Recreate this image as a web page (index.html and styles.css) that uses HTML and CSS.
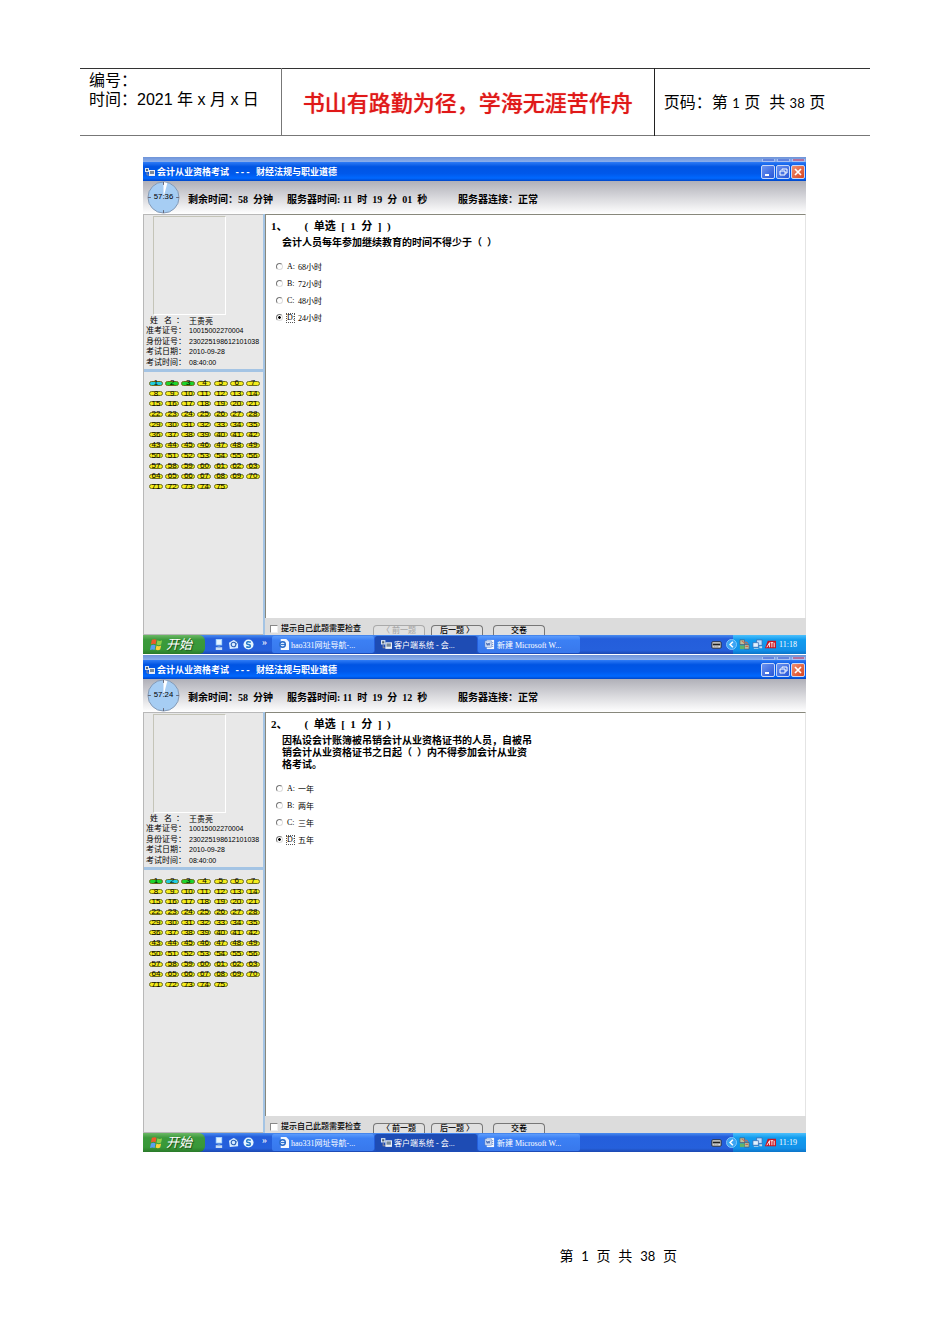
FILE: index.html
```html
<!DOCTYPE html>
<html lang="zh-CN">
<head>
    <meta charset="UTF-8">
    <meta name="viewport" content="width=device-width, initial-scale=1.0">
    <title>会计从业资格考试</title>
    <link rel="stylesheet" href="styles.css">
</head>
<body>

    <!-- shared icons -->
    <svg class="sprite" width="0" height="0" aria-hidden="true">
        <symbol id="i-app" viewBox="0 0 10 10">
            <path d="M0 1h4v4H0z" fill="#d8e4f4"/>
            <path d="M1 2h2v2H1z" fill="#567"/>
            <path d="M2 5v3h3" fill="none" stroke="#889" stroke-width="1"/>
            <path d="M4 3h6v6H4z" fill="#e8eef6"/>
            <path d="M5 4h4v3H5z" fill="#789"/>
        </symbol>
        <symbol id="i-flag" viewBox="0 0 14 14">
            <path d="M2 2q3-1.5 5 0L6 7Q4 5.5 1 7z" fill="#ee5a2a"/>
            <path d="M8 2.5q2.5 1.5 5 0l-1 4.5q-2.5 1.5-5 0z" fill="#8cd04a"/>
            <path d="M1 8q2.5-1.5 5 0l-1 5q-2.5-1.5-5 0z" fill="#58a0f0"/>
            <path d="M7 8q2.5 1.5 5 0l-1 4.5q-2.5 1.5-5 0z" fill="#fbd23c"/>
        </symbol>
        <symbol id="i-desk" viewBox="0 0 12 12">
            <path d="M3 0h7v7H3z" fill="#9fd0ff"/>
            <path d="M4 1h5v5H4z" fill="#e6f4ff"/>
            <path d="M3 9h7v3H3z" fill="#c8dcf4"/>
            <path d="M5 7h3v2H5z" fill="#5b8fd8"/>
        </symbol>
        <symbol id="i-mail" viewBox="0 0 12 12">
            <path d="M1 4l5-3 5 2v7l-9 1z" fill="#d8ecff"/>
            <circle cx="6" cy="6" r="2.5" fill="none" stroke="#2a62b8" stroke-width="1.2"/>
            <path d="M8 2l3 1-2 3" fill="none" stroke="#2a62b8" stroke-width="1"/>
        </symbol>
        <symbol id="i-s" viewBox="0 0 12 12">
            <circle cx="6" cy="6" r="5.5" fill="#e6f6ff"/>
            <path d="M8.5 3.5Q4 2 4 4.5 4 6 6 6t2 1.5Q8 10 3.5 8.5" fill="none" stroke="#2277c8" stroke-width="1.6"/>
        </symbol>
        <symbol id="i-ie" viewBox="0 0 12 12">
            <path d="M3 0h6l3 3v9H3z" fill="#f4f8ff"/>
            <circle cx="5" cy="6" r="3" fill="#dcecff" stroke="#2468c8" stroke-width="1.5"/>
            <path d="M3 6h5" stroke="#2468c8" stroke-width="1"/>
        </symbol>
        <symbol id="i-word" viewBox="0 0 12 12">
            <path d="M3 1h8v10H3z" fill="#f4f8ff"/>
            <path d="M1 2h7v7H1z" fill="#dbe7fa" stroke="#4a74c0" stroke-width=".6"/>
            <path d="M2.5 4l1 3 1-2.5 1 2.5 1-3M9 4h1M9 6h1M9 8h1" fill="none" stroke="#3158a8" stroke-width=".9"/>
        </symbol>
        <symbol id="i-kbd" viewBox="0 0 12 12">
            <rect x="1" y="3" width="10" height="7" rx="1" fill="#e8e8e8" stroke="#222" stroke-width="1"/>
            <path d="M2 5h8v2H2z" fill="#222"/>
            <path d="M3 8.5h6" stroke="#666" stroke-width="1" stroke-dasharray="1 1"/>
        </symbol>
        <symbol id="i-back" viewBox="0 0 12 12">
            <circle cx="6" cy="6" r="5.5" fill="#3aa4f4" stroke="#9fd8ff" stroke-width=".8"/>
            <path d="M7.5 3l-3 3 3 3" fill="none" stroke="#fff" stroke-width="1.7"/>
        </symbol>
        <symbol id="i-net" viewBox="0 0 12 12">
            <path d="M1 1h5v5H1zM6 6h5v5H6z" fill="#b8c0a0" stroke="#556" stroke-width=".7"/>
            <path d="M1 7h5v4H1z" fill="#62b46a"/>
            <path d="M3 2l4 3M7 3l3 2M7 8h3" stroke="#d06a48" stroke-width="1.2"/>
        </symbol>
        <symbol id="i-pc" viewBox="0 0 12 12">
            <path d="M5 1h6v6H5z" fill="#bfe0ff" stroke="#3568b0" stroke-width=".8"/>
            <path d="M1 4h6v5H1z" fill="#e2f2ff" stroke="#3568b0" stroke-width=".8"/>
            <path d="M2 10h5v1H2zM8 8h3v2H8z" fill="#c8d8e8"/>
        </symbol>
        <symbol id="i-ati" viewBox="0 0 12 12">
            <path d="M3 2h9v8H0z" fill="#c81420"/>
            <path d="M2 9l3-5v5M6 4h3M7.5 4v5M10 4v5" fill="none" stroke="#fff" stroke-width="1"/>
        </symbol>
        <symbol id="i-min" viewBox="0 0 12 12">
            <path d="M3 8h4v2H3z" fill="#fff"/>
        </symbol>
        <symbol id="i-restore" viewBox="0 0 12 12">
            <path d="M5 4V3h5v4H8M3 5h5v4H3z" fill="none" stroke="#fff" stroke-width="1"/>
        </symbol>
        <symbol id="i-close" viewBox="0 0 12 12">
            <path d="M3 3l6 6M9 3l-6 6" stroke="#fff" stroke-width="1.7"/>
        </symbol>
    </svg>

    <table class="doc-header">
        <tr>
            <td class="doc-info">编号：<br>时间：2021 年 x 月 x 日</td>
            <td class="doc-motto">书山有路勤为径，学海无涯苦作舟</td>
            <td class="doc-page">页码：第 <span>1</span> 页&nbsp; 共 <span>38</span> 页</td>
        </tr>
    </table>

    <main class="shots">

        <section class="window">
            <div class="behind"><i></i><i></i><i></i></div>
            <header class="title-bar">
                <svg class="app-icon"><use href="#i-app"/></svg>
                <h2>会计从业资格考试 --- 财经法规与职业道德</h2>
                <button class="win-btn" aria-label="最小化"><svg><use href="#i-min"/></svg></button>
                <button class="win-btn" aria-label="还原"><svg><use href="#i-restore"/></svg></button>
                <button class="win-btn close" aria-label="关闭"><svg><use href="#i-close"/></svg></button>
            </header>
            <div class="status">
                <svg class="clock" viewBox="0 0 34 34">
                    <circle cx="17" cy="17" r="16" fill="#a6cdf3" stroke="#8298b4"/>
                    <path d="M17 17V1l4 1z" fill="#fff"/>
                    <path d="M17 1v3M17 30v3M1 17h3M30 17h3" stroke="#667"/>
                    <text x="17" y="19" text-anchor="middle">57:36</text>
                </svg>
                <span class="left-time">剩余时间：58&nbsp; 分钟</span>
                <span class="server-time">服务器时间: 11&nbsp; 时&nbsp; 19&nbsp; 分&nbsp; 01&nbsp; 秒</span>
                <span>服务器连接：正常</span>
            </div>
            <div class="exam">
                <aside class="side">
                    <div class="profile">
                        <div class="photo"></div>
                        <dl>
                            <dt>&nbsp; 姓&nbsp;&nbsp; 名&nbsp; ：</dt><dd class="name">王贵亮</dd>
                            <dt>准考证号：</dt><dd>10015002270004</dd>
                            <dt>身份证号：</dt><dd>230225198612101038</dd>
                            <dt>考试日期：</dt><dd>2010-09-28</dd>
                            <dt>考试时间：</dt><dd>08:40:00</dd>
                        </dl>
                    </div>
                    <div class="numbers" data-current="1" data-done="2,3"></div>
                </aside>
                <div class="content">
                    <div class="question">
                        <h3><span>1、</span><span>(&nbsp; 单选&nbsp; [&nbsp; 1&nbsp; 分&nbsp; ]&nbsp; )</span></h3>
                        <p>会计人员每年参加继续教育的时间不得少于（&nbsp; ）</p>
                        <div class="options">
                            <label><input type="radio" name="q1"><b>A:</b>68小时</label>
                            <label><input type="radio" name="q1"><b>B:</b>72小时</label>
                            <label><input type="radio" name="q1"><b>C:</b>48小时</label>
                            <label><input type="radio" name="q1" checked><b>D:</b>24小时</label>
                        </div>
                    </div>
                    <div class="actions">
                        <label><input type="checkbox">提示自己此题需要检查</label>
                        <button disabled>〈 前一题</button>
                        <button>后一题 〉</button>
                        <button class="submit">交卷</button>
                    </div>
                </div>
            </div>
            <footer class="taskbar">
                <button class="start"><svg><use href="#i-flag"/></svg>开始</button>
                <div class="quick">
                    <svg><use href="#i-desk"/></svg>
                    <svg><use href="#i-mail"/></svg>
                    <svg><use href="#i-s"/></svg>
                    <span>»</span>
                </div>
                <button class="task"><svg><use href="#i-ie"/></svg>hao331网址导航-...</button>
                <button class="task active"><svg><use href="#i-app"/></svg>客户端系统 - 会...</button>
                <button class="task"><svg><use href="#i-word"/></svg>新建 Microsoft W...</button>
                <svg class="keyboard"><use href="#i-kbd"/></svg>
                <div class="tray">
                    <svg class="back"><use href="#i-back"/></svg>
                    <svg><use href="#i-net"/></svg>
                    <svg><use href="#i-pc"/></svg>
                    <svg><use href="#i-ati"/></svg>
                    <time>11:18</time>
                </div>
            </footer>
        </section>

        <section class="window">
            <div class="behind"><i></i><i></i><i></i></div>
            <header class="title-bar">
                <svg class="app-icon"><use href="#i-app"/></svg>
                <h2>会计从业资格考试 --- 财经法规与职业道德</h2>
                <button class="win-btn" aria-label="最小化"><svg><use href="#i-min"/></svg></button>
                <button class="win-btn" aria-label="还原"><svg><use href="#i-restore"/></svg></button>
                <button class="win-btn close" aria-label="关闭"><svg><use href="#i-close"/></svg></button>
            </header>
            <div class="status">
                <svg class="clock" viewBox="0 0 34 34">
                    <circle cx="17" cy="17" r="16" fill="#a6cdf3" stroke="#8298b4"/>
                    <path d="M17 17V1l4 1z" fill="#fff"/>
                    <path d="M17 1v3M17 30v3M1 17h3M30 17h3" stroke="#667"/>
                    <text x="17" y="19" text-anchor="middle">57:24</text>
                </svg>
                <span class="left-time">剩余时间：58&nbsp; 分钟</span>
                <span class="server-time">服务器时间: 11&nbsp; 时&nbsp; 19&nbsp; 分&nbsp; 12&nbsp; 秒</span>
                <span>服务器连接：正常</span>
            </div>
            <div class="exam">
                <aside class="side">
                    <div class="profile">
                        <div class="photo"></div>
                        <dl>
                            <dt>&nbsp; 姓&nbsp;&nbsp; 名&nbsp; ：</dt><dd class="name">王贵亮</dd>
                            <dt>准考证号：</dt><dd>10015002270004</dd>
                            <dt>身份证号：</dt><dd>230225198612101038</dd>
                            <dt>考试日期：</dt><dd>2010-09-28</dd>
                            <dt>考试时间：</dt><dd>08:40:00</dd>
                        </dl>
                    </div>
                    <div class="numbers" data-current="2" data-done="1,3"></div>
                </aside>
                <div class="content">
                    <div class="question">
                        <h3><span>2、</span><span>(&nbsp; 单选&nbsp; [&nbsp; 1&nbsp; 分&nbsp; ]&nbsp; )</span></h3>
                        <p>因私设会计账簿被吊销会计从业资格证书的人员，自被吊<br>销会计从业资格证书之日起（&nbsp; ）内不得参加会计从业资<br>格考试。</p>
                        <div class="options">
                            <label><input type="radio" name="q2"><b>A:</b>一年</label>
                            <label><input type="radio" name="q2"><b>B:</b>两年</label>
                            <label><input type="radio" name="q2"><b>C:</b>三年</label>
                            <label><input type="radio" name="q2" checked><b>D:</b>五年</label>
                        </div>
                    </div>
                    <div class="actions">
                        <label><input type="checkbox">提示自己此题需要检查</label>
                        <button>〈 前一题</button>
                        <button>后一题 〉</button>
                        <button class="submit">交卷</button>
                    </div>
                </div>
            </div>
            <footer class="taskbar">
                <button class="start"><svg><use href="#i-flag"/></svg>开始</button>
                <div class="quick">
                    <svg><use href="#i-desk"/></svg>
                    <svg><use href="#i-mail"/></svg>
                    <svg><use href="#i-s"/></svg>
                    <span>»</span>
                </div>
                <button class="task"><svg><use href="#i-ie"/></svg>hao331网址导航-...</button>
                <button class="task active"><svg><use href="#i-app"/></svg>客户端系统 - 会...</button>
                <button class="task"><svg><use href="#i-word"/></svg>新建 Microsoft W...</button>
                <svg class="keyboard"><use href="#i-kbd"/></svg>
                <div class="tray">
                    <svg class="back"><use href="#i-back"/></svg>
                    <svg><use href="#i-net"/></svg>
                    <svg><use href="#i-pc"/></svg>
                    <svg><use href="#i-ati"/></svg>
                    <time>11:19</time>
                </div>
            </footer>
        </section>

    </main>

    <footer class="page-number">第&nbsp; <span>1</span>&nbsp; 页&nbsp; 共&nbsp; <span>38</span>&nbsp; 页</footer>

    <script>
        // question number buttons
        document.querySelectorAll('.numbers').forEach(box => {
            const done = box.dataset.done.split(',');
            for (let i = 1; i <= 75; i++) {
                const btn = document.createElement('button');
                btn.textContent = i;
                if (String(i) === box.dataset.current) btn.className = 'current';
                if (done.includes(String(i))) btn.className = 'done';
                box.appendChild(btn);
            }
        });
    </script>

</body>
</html>
```

FILE: styles.css
```css
* {
    box-sizing: border-box;
}
body {
    margin: 0;
    padding: 68px 80px 78px;
    background: #fff;
    color: #000;
    font-family: "Liberation Sans", "Noto Sans CJK SC", sans-serif;
}
button {
    font-family: inherit;
    padding: 0;
    margin: 0;
    border: none;
    cursor: pointer;
}
.sprite {
    position: absolute;
}

/* document header */
.doc-header {
    width: 100%;
    height: 68px;
    border-collapse: collapse;
    table-layout: fixed;
    border-top: 1px solid #333;
    border-bottom: 1px solid #777;
}
.doc-header td {
    padding: 2px 9px 0;
    font-size: 16px;
    line-height: 19px;
    white-space: nowrap;
}
.doc-header .doc-info {
    width: 25.5%;
    vertical-align: top;
}
.doc-header .doc-motto {
    width: 47.2%;
    padding: 2px 0 0;
    text-align: center;
    font-size: 22px;
    font-weight: 500;
    color: #e01818;
    text-shadow: 0 0 1px #f08080;
    border-left: 1px solid #777;
    border-right: 1px solid #222;
}
.doc-page span {
    font-family: Lato, sans-serif;
    font-size: 13px;
}

/* exam windows */
.shots {
    display: flex;
    flex-direction: column;
    gap: 1px;
    padding: 21px 64px 0 63px;
}
.window {
    font-family: "Liberation Serif", "Noto Sans CJK SC", serif;
    font-size: 8px;
    background: #e8e8e8;
}
.behind {
    display: flex;
    justify-content: flex-end;
    gap: 2px;
    height: 5px;
    padding: 2px 1px 0;
    background: linear-gradient(#6f94d8, #8aaeec);
}
.behind i {
    width: 13px;
    background: #6484dc;
    border: 1px solid #a8c0f0;
    border-top: none;
}
.behind i:last-child {
    background: #b4709c;
}
.title-bar {
    display: flex;
    align-items: center;
    gap: 1px;
    height: 19px;
    padding: 0 1px 0 2px;
    background: linear-gradient(#2f7cf6, #0054e3 25%, #0058ea 60%, #0068ff 85%, #0046c8);
}
.app-icon {
    width: 10px;
    height: 10px;
}
.title-bar h2 {
    flex: 1;
    margin: 0 0 0 1px;
    padding-top: 3px;
    font-family: "Liberation Mono", "Noto Sans CJK SC", monospace;
    font-size: 9px;
    line-height: 16px;
    color: #fff;
    white-space: nowrap;
}
.win-btn {
    width: 14px;
    height: 14px;
    border: 1px solid #c8d8f8;
    border-radius: 2px;
    background: linear-gradient(135deg, #6c94f0, #2656d8);
}
.win-btn svg {
    display: block;
    width: 12px;
    height: 12px;
}
.win-btn.close {
    background: linear-gradient(135deg, #f09070, #d84420);
}
.status {
    display: flex;
    align-items: center;
    height: 33px;
    padding-left: 4px;
    background: linear-gradient(#b0b0b8, #d8d8dc 50%, #fff);
    font-size: 10px;
    font-weight: bold;
    white-space: nowrap;
}
.status span {
    padding-top: 2px;
}
.clock {
    width: 33px;
    height: 33px;
}
.clock text {
    font: 8px "Liberation Sans", sans-serif;
}
.left-time {
    width: 99px;
    margin-left: 8px;
}
.server-time {
    width: 171px;
}
.exam {
    display: flex;
    min-height: 421px;
}

/* candidate panel */
.side {
    width: 120px;
    display: flex;
    flex-direction: column;
    border: 1px solid #b8b8b8;
    border-right: none;
}
.profile {
    padding: 1px 0;
    border-bottom: 3px solid #a4c4e4;
}
.photo {
    width: 73px;
    height: 99px;
    margin: 0 0 1px 9px;
    border: 1px solid #c4c4b8;
    border-right-color: #fff;
    border-bottom-color: #fff;
}
.profile dl {
    display: grid;
    grid-template-columns: 43px 1fr;
    grid-auto-rows: 1fr;
    height: 52px;
    margin: 0;
    padding-left: 2px;
    line-height: 10px;
    white-space: nowrap;
}
.profile dd {
    margin: 0;
    font-family: "Liberation Sans", sans-serif;
    font-size: 7px;
}
.profile .name {
    font-family: "Noto Sans CJK SC", sans-serif;
    font-size: 8px;
}
.numbers {
    display: grid;
    grid-template-columns: repeat(7, 1fr);
    grid-auto-rows: 1fr;
    align-items: center;
    justify-items: center;
    height: 114px;
    margin: 6px 2px 0 4px;
}
.numbers button {
    display: flex;
    align-items: center;
    justify-content: center;
    width: 14px;
    height: 5px;
    border: 1px solid #6c6c1c;
    border-radius: 3px;
    background: #f4ec1c;
    font-family: "Liberation Sans", sans-serif;
    font-size: 8px;
    line-height: 8px;
}
.numbers .current {
    background: #20ccdc;
}
.numbers .done {
    background: #1cd42c;
}

/* question area */
.content {
    flex: 1;
    display: flex;
    flex-direction: column;
    border-left: 2px solid #a4c4e4;
}
.question {
    flex: 1;
    padding: 4px 5px;
    background: #fff;
    border: 1px solid #88887c;
    border-right-color: #e4e4e4;
    border-bottom: none;
}
.question h3 {
    display: flex;
    gap: 17px;
    margin: 0;
    font-size: 11px;
    line-height: 14px;
}
.question p {
    margin: 4px 0 9px 11px;
    font-size: 10px;
    font-weight: bold;
    line-height: 12px;
}
.options label {
    display: flex;
    align-items: center;
    height: 17px;
    padding-left: 5px;
}
.options b {
    width: 9px;
    margin: 0 3px;
    border: 1px solid transparent;
    font-weight: normal;
    line-height: 8px;
}
.options input {
    appearance: none;
    width: 7px;
    height: 7px;
    margin: 0;
    border: 1px solid #777;
    border-right-color: #ddd;
    border-bottom-color: #ddd;
    border-radius: 50%;
    background: #fff;
}
.options input:checked {
    background: radial-gradient(#000 30%, #fff 45%);
}
.options input:checked + b {
    border: 1px dotted #555;
}
.actions {
    display: flex;
    align-items: flex-start;
    gap: 6px;
    height: 17px;
    padding: 7px 0 0 5px;
    background: #dcdcdc;
}
.actions label {
    display: flex;
    align-items: center;
    gap: 3px;
    width: 97px;
    font-weight: 500;
    line-height: 8px;
    white-space: nowrap;
}
.actions input {
    appearance: none;
    width: 8px;
    height: 8px;
    margin: 0;
    background: #fff;
    border: 1px solid #888;
    border-right-color: #eee;
    border-bottom-color: #eee;
}
.actions button {
    width: 52px;
    height: 10px;
    border: 1px solid #777;
    border-bottom: none;
    border-radius: 4px 4px 0 0;
    background: #e0e0e0;
    color: #000;
    font-size: 8px;
    font-weight: 500;
    line-height: 10px;
}
.actions button:disabled {
    color: #aaa;
    border-color: #aaa;
}
.actions .submit {
    margin-left: 4px;
}

/* taskbar */
.taskbar {
    display: flex;
    align-items: stretch;
    gap: 1px;
    height: 19px;
    background: linear-gradient(#4a8cf0, #245edb 20%, #2560dc 80%, #1c48b0);
    color: #fff;
}
.taskbar svg {
    flex: none;
    width: 11px;
    height: 11px;
}
.start {
    display: flex;
    align-items: center;
    gap: 3px;
    width: 62px;
    padding-left: 7px;
    border-radius: 0 6px 6px 0;
    background: linear-gradient(#6cb866, #3c9a3c 25%, #389838 75%, #2a7a2a);
    color: #fff;
    font-size: 13px;
    font-style: italic;
    line-height: 17px;
    text-shadow: 1px 1px 1px #1c4c1c;
}
.taskbar .start svg {
    width: 13px;
    height: 13px;
}
.quick {
    display: flex;
    align-items: center;
    gap: 4px;
    width: 65px;
    padding-left: 7px;
}
.quick span {
    margin: 0 0 6px 4px;
    font-size: 10px;
}
.task {
    display: flex;
    align-items: center;
    gap: 2px;
    width: 102px;
    margin: 1px 0;
    padding-left: 6px;
    border-radius: 2px;
    background: linear-gradient(#5c9cfc, #3c80f4 25%, #3878ec);
    color: #fff;
    font-size: 8px;
    white-space: nowrap;
}
.task.active {
    background: #1e4cb4;
}
.keyboard {
    align-self: center;
    margin-left: auto;
}
.tray {
    display: flex;
    align-items: center;
    gap: 2px;
    width: 73px;
    margin-left: 10px;
    background: linear-gradient(#4cc0fc, #129cee 25%, #1290e8 80%, #0c74c8);
}
.tray .back {
    margin-left: -7px;
}
.tray time {
    margin-left: 1px;
}
.page-number {
    margin-top: 95px;
    padding-right: 193px;
    text-align: right;
    font-size: 14px;
    line-height: 18px;
}
.page-number span {
    font-family: Lato, sans-serif;
    font-size: 13px;
}
```
